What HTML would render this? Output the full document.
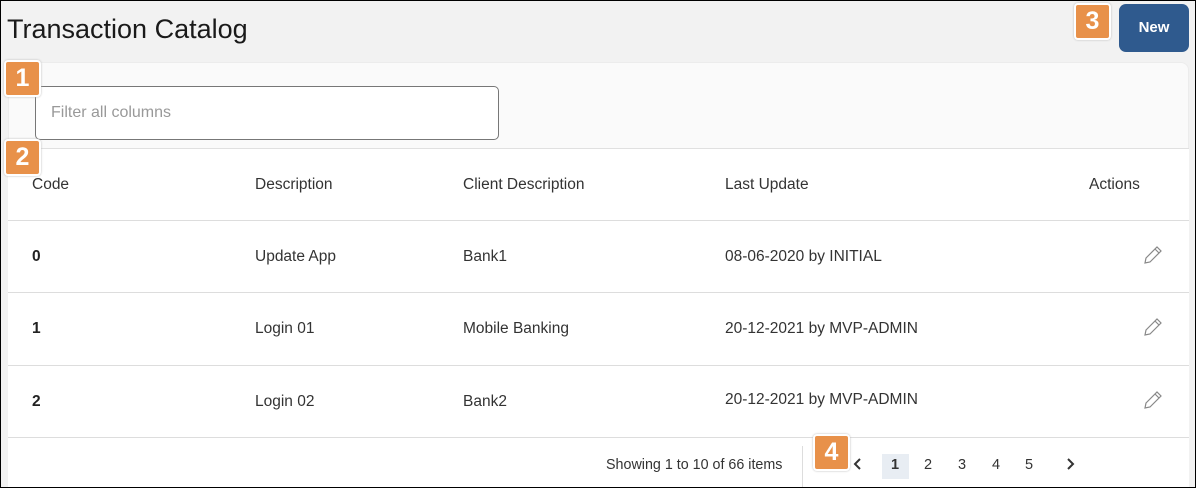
<!DOCTYPE html>
<html><head><style>
*{box-sizing:border-box;margin:0;padding:0}
body{width:1196px;height:488px;overflow:hidden;font-family:"Liberation Sans",sans-serif;background:#f2f2f2;position:relative;color:#222}
.frame{position:absolute;left:0;top:0;width:1196px;height:488px;border:1px solid #000;z-index:10;pointer-events:none}
h1{position:absolute;left:7px;top:14px;font-size:27px;font-weight:normal;color:#1a1a1a}
.new{position:absolute;left:1119px;top:4px;width:70px;height:48px;background:#2f5a8e;border-radius:7px;color:#fff;font-size:15px;font-weight:bold;text-align:center;line-height:48px}
.card{position:absolute;left:8px;top:62px;width:1181px;height:426px;background:#fafafa;border-radius:0 8px 0 0;border:1px solid #ececec}
.filter{position:absolute;left:35px;top:86px;width:464px;height:54px;background:#fff;border:1px solid #777;border-radius:5px;font-size:16px;color:#999;padding-left:15px;line-height:52px}
.tbl{position:absolute;left:8px;top:148px;width:1181px;height:340px;background:#fff;border-top:1px solid #e0e0e0}
.line{position:absolute;left:8px;width:1181px;height:1px;background:#ddd}
.t{position:absolute;font-size:15.5px;color:#333}
.b{font-weight:bold;color:#222}
.badge{position:absolute;width:37px;height:37px;background:#e8914a;border:2px solid #fff;border-radius:4px;color:#fff;font-weight:bold;font-size:25px;text-align:center;line-height:33px;box-shadow:0 0 2px #bbb;z-index:5}
.pg{position:absolute;top:452px;font-size:15px;color:#333}
</style></head><body>
<div class="frame"></div>
<h1>Transaction Catalog</h1>
<div class="new">New</div>
<div class="badge" style="left:1074px;top:3px">3</div>
<div class="card"></div>
<div class="filter">Filter all columns</div>
<div class="badge" style="left:4px;top:60px">1</div>
<div class="tbl"></div>
<div class="badge" style="left:4px;top:139px">2</div>
<div class="line" style="top:220px"></div>
<div class="line" style="top:292px"></div>
<div class="line" style="top:365px"></div>
<div class="line" style="top:437px"></div>
<div class="t" style="left:32px;top:176px">Code</div>
<div class="t" style="left:255px;top:176px">Description</div>
<div class="t" style="left:463px;top:176px">Client Description</div>
<div class="t" style="left:725px;top:176px">Last Update</div>
<div class="t" style="left:1089px;top:176px">Actions</div>

<div class="t b" style="left:32px;top:248px">0</div>
<div class="t" style="left:255px;top:248px">Update App</div>
<div class="t" style="left:463px;top:248px">Bank1</div>
<div class="t" style="left:725px;top:248px">08-06-2020 by INITIAL</div>

<div class="t b" style="left:32px;top:320px">1</div>
<div class="t" style="left:255px;top:320px">Login 01</div>
<div class="t" style="left:463px;top:320px">Mobile Banking</div>
<div class="t" style="left:725px;top:320px">20-12-2021 by MVP-ADMIN</div>

<div class="t b" style="left:32px;top:393px">2</div>
<div class="t" style="left:255px;top:393px">Login 02</div>
<div class="t" style="left:463px;top:393px">Bank2</div>
<div class="t" style="left:725px;top:391px">20-12-2021 by MVP-ADMIN</div>

<svg style="position:absolute;left:1142px;top:244px" width="22" height="22" viewBox="0 0 22 22"><path d="M3 19 L4 14 L15 3 L19 7 L8 18 Z M13 5 L17 9" fill="none" stroke="#888" stroke-width="1.2"/></svg>
<svg style="position:absolute;left:1142px;top:316px" width="22" height="22" viewBox="0 0 22 22"><path d="M3 19 L4 14 L15 3 L19 7 L8 18 Z M13 5 L17 9" fill="none" stroke="#888" stroke-width="1.2"/></svg>
<svg style="position:absolute;left:1142px;top:389px" width="22" height="22" viewBox="0 0 22 22"><path d="M3 19 L4 14 L15 3 L19 7 L8 18 Z M13 5 L17 9" fill="none" stroke="#888" stroke-width="1.2"/></svg>

<div class="t" style="left:606px;top:457px;font-size:14.3px">Showing 1 to 10 of 66 items</div>
<div style="position:absolute;left:802px;top:446px;width:1px;height:42px;background:#ddd"></div>
<div class="badge" style="left:813px;top:434px">4</div>
<svg style="position:absolute;left:852px;top:457px" width="12" height="14"><path d="M8 2 L3 7 L8 12" fill="none" stroke="#333" stroke-width="2"/></svg>
<div style="position:absolute;left:882px;top:454px;width:27px;height:25px;background:#e8edf3"></div>
<div class="pg" style="left:891px;top:457px;font-size:14.5px;font-weight:bold">1</div>
<div class="pg" style="left:924px;top:457px;font-size:14.5px">2</div>
<div class="pg" style="left:958px;top:457px;font-size:14.5px">3</div>
<div class="pg" style="left:992px;top:457px;font-size:14.5px">4</div>
<div class="pg" style="left:1025px;top:457px;font-size:14.5px">5</div>
<svg style="position:absolute;left:1064px;top:457px" width="12" height="14"><path d="M4 2 L9 7 L4 12" fill="none" stroke="#333" stroke-width="2"/></svg>
</body></html>
